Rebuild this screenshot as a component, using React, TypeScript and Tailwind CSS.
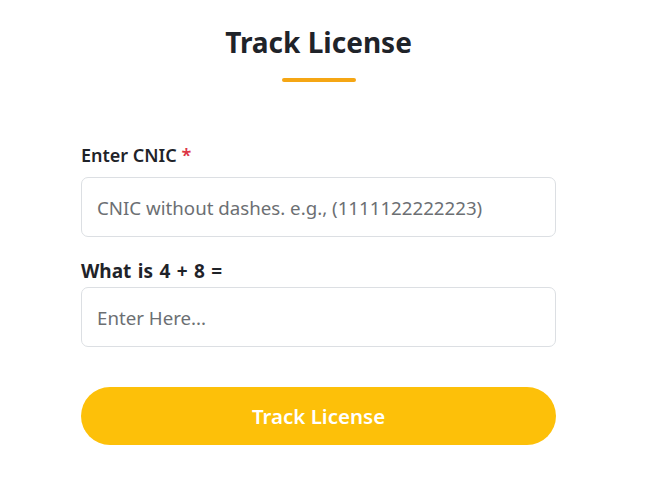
export default function App() {
	return (
		<main
			className="w-[637px] bg-white pt-[24px] pb-[49px]"
			style={{ fontFamily: '"Noto Sans", "Open Sans", sans-serif' }}
		>
			{/* HEADER */}
			<section className="flex flex-col items-center">
				<h1 className="text-[28px] leading-[36px] font-bold text-[#1f2329]">
					Track License
				</h1>
				<div className="mt-[18px] h-[4px] w-[74px] rounded-full bg-[#f5a614]" />
			</section>

			{/* FORM */}
			<form className="mx-auto mt-[60px] w-[475px]">
				<label className="block text-[18px] leading-[26px] font-semibold text-[#1f2329]">
					Enter CNIC <span className="text-[#dc3545]">*</span>
				</label>
				<input
					type="text"
					placeholder="CNIC without dashes. e.g., (1111122222223)"
					className="mt-[9px] block h-[60px] w-full rounded-[7px] border border-[#dcdfe3] px-[15px] text-[18.7px] text-[#333] placeholder:text-[#6c6f73] outline-none"
				/>

				<label className="mt-[22px] block text-[19px] leading-[24px] font-bold text-[#1f2329] [word-spacing:1.5px]">
					What is 4 + 8 =
				</label>
				<input
					type="text"
					placeholder="Enter Here..."
					className="mt-[4px] block h-[60px] w-full rounded-[7px] border border-[#dcdfe3] px-[15px] text-[18.7px] text-[#333] placeholder:text-[#6c6f73] outline-none"
				/>

				<button
					type="button"
					className="mt-[40px] block h-[58px] w-full rounded-full bg-[#fdc009] text-[20.5px] font-semibold text-white"
				>
					Track License
				</button>
			</form>
		</main>
	);
}
